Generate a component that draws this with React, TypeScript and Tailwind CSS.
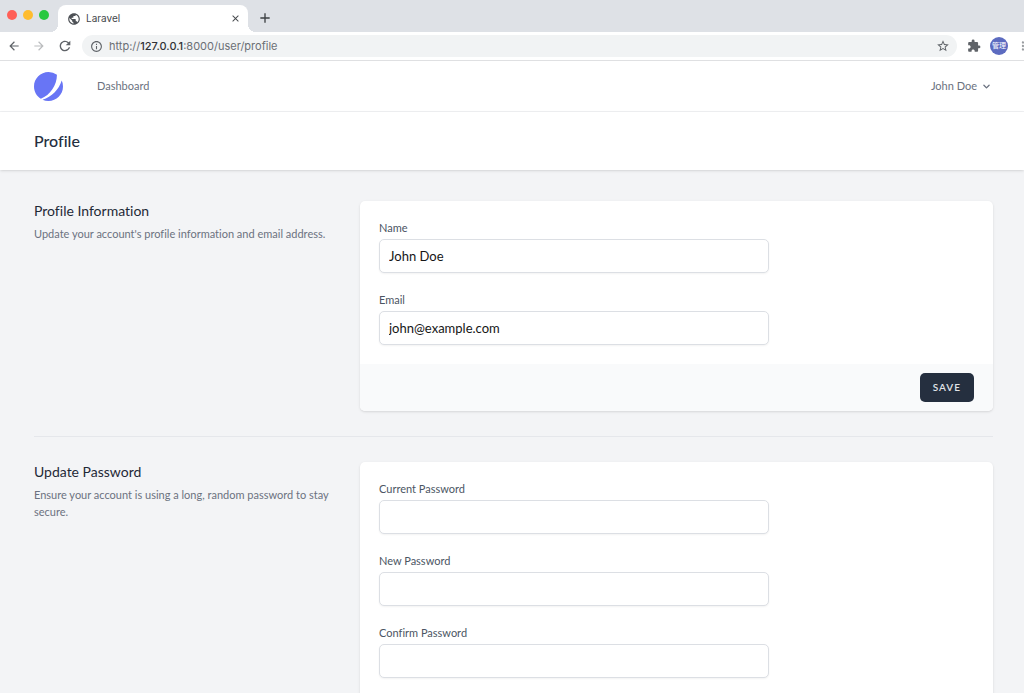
import { useState } from "react";
import {
  MdAdd,
  MdArrowBack,
  MdArrowForward,
  MdClose,
  MdExtension,
  MdInfoOutline,
  MdMoreVert,
  MdPublic,
  MdRefresh,
  MdStarBorder,
} from "react-icons/md";

function BrowserChrome() {
  return (
    <div className="shrink-0 font-['Inter','Noto_Sans_CJK_JP',sans-serif]">
      <div className="flex h-8 items-start bg-[#dee1e6] pl-[7px]">
        <div className="flex w-[51px] gap-[6px] pt-[10px]">
          <span className="size-[10px] rounded-full bg-[#ff5f57]" />
          <span className="size-[10px] rounded-full bg-[#febc2e]" />
          <span className="size-[10px] rounded-full bg-[#28c840]" />
        </div>
        <div className="relative mt-[5px] flex h-[27px] w-[190px] items-center rounded-t-lg bg-white pr-[7px] pl-[9px] text-[10px] text-[#45484c]">
          <span className="absolute bottom-0 -left-2 size-2 bg-[radial-gradient(circle_at_0_0,#dee1e6_8px,white_8px)]" />
          <span className="absolute -right-2 bottom-0 size-2 bg-[radial-gradient(circle_at_100%_0,#dee1e6_8px,white_8px)]" />
          <MdPublic className="size-[14px] text-[#4d5156]" />
          <span className="ml-[5px] flex-1">Laravel</span>
          <button aria-label="Close tab" className="text-[#45484c]">
            <MdClose className="size-[11px]" />
          </button>
        </div>
        <button aria-label="New tab" className="mt-[10px] ml-[9px] text-[#3c4043]">
          <MdAdd className="size-4" />
        </button>
      </div>
      <div className="flex h-[29px] items-center overflow-hidden border-b border-[#dfe0e2] bg-white pl-[7px] text-[#5f6368]">
        <button aria-label="Back">
          <MdArrowBack className="size-[14px]" />
        </button>
        <button aria-label="Forward" className="ml-[11px] text-[#babcbe]">
          <MdArrowForward className="size-[14px]" />
        </button>
        <button aria-label="Reload" className="ml-[11px]">
          <MdRefresh className="size-4" />
        </button>
        <div className="ml-[9px] flex h-[22px] flex-1 items-center rounded-full bg-[#f1f3f4] pr-[7px] pl-[8px]">
          <MdInfoOutline className="size-[13px]" />
          <div
            role="textbox"
            aria-label="Address"
            contentEditable
            suppressContentEditableWarning
            className="ml-[6px] flex-1 text-[11px] text-[#6b6f74]"
          >
            http://<span className="font-medium text-[#303236]">127.0.0.1</span>:8000/user/profile
          </div>
          <button aria-label="Bookmark this page">
            <MdStarBorder className="size-[14px]" />
          </button>
        </div>
        <button aria-label="Extensions" className="ml-[10px]">
          <MdExtension className="size-[14px]" />
        </button>
        <button className="ml-[9px] size-[18px] rounded-full bg-[#5c6bc0] text-[7px] text-white">
          管理
        </button>
        <button aria-label="Menu" className="-mr-[6px] ml-[8px] text-[#9a9da1]">
          <MdMoreVert className="size-[14px]" />
        </button>
      </div>
    </div>
  );
}

function Mark() {
  return (
    <svg viewBox="0 0 48 48" fill="none" className="size-[29px]" aria-hidden="true">
      <path
        d="M11.395 44.428C4.557 40.198 0 32.632 0 24 0 10.745 10.745 0 24 0a23.891 23.891 0 0113.997 4.502c-.2 17.907-11.097 33.245-26.602 39.926z"
        fill="#6875F5"
      />
      <path
        d="M14.134 45.885A23.914 23.914 0 0024 48c13.255 0 24-10.745 24-24 0-3.516-.756-6.856-2.115-9.866-4.659 15.143-16.608 27.092-31.75 31.751z"
        fill="#6875F5"
      />
    </svg>
  );
}

type FieldProps = { id: string; label: string; type?: string; initial?: string };

function Field({ id, label, type = "text", initial = "" }: FieldProps) {
  const [value, setValue] = useState(initial);
  return (
    <div className="col-span-4">
      <label htmlFor={id} className="block text-[11px] leading-4 text-[#4b5563]">
        {label}
      </label>
      <input
        id={id}
        type={type}
        value={value}
        onChange={(e) => setValue(e.target.value)}
        className="mt-[3px] block h-[34px] w-full rounded-[5px] border border-[#dcdfe4] bg-white px-[9px] text-[13px] text-[#161616] shadow-xs outline-none focus:border-indigo-300"
      />
    </div>
  );
}

type SectionProps = { title: string; description: string; fields: FieldProps[] };

function Section({ title, description, fields }: SectionProps) {
  return (
    <section className="grid grid-cols-3 gap-[19px]">
      <div>
        <h3 className="text-[14px] leading-5 text-[#1f2937]">{title}</h3>
        <p className="mt-1 text-[11px] leading-[17px] text-[#6b7280]">{description}</p>
      </div>
      <form
        className="col-span-2 overflow-hidden rounded-[5px] bg-white shadow-sm"
        onSubmit={(e) => e.preventDefault()}
      >
        <div className="grid grid-cols-6 gap-[19px] p-[19px]">
          {fields.map((f) => (
            <Field key={f.id} {...f} />
          ))}
        </div>
        <div className="flex justify-end bg-[#f9fafb] px-[19px] py-[9px]">
          <button className="h-[29px] rounded-[5px] bg-[#252f3f] px-[13px] text-[10px] font-semibold tracking-widest text-[#e2e4e8]">
            SAVE
          </button>
        </div>
      </form>
    </section>
  );
}

export default function App() {
  return (
    <div className="flex h-screen flex-col overflow-hidden bg-[#f3f4f6]">
      <BrowserChrome />
      <div className="min-h-0 flex-1 overflow-y-auto font-['Lato',sans-serif] [font-variant-ligatures:none] [scrollbar-width:none]">
        <nav className="flex h-[51px] items-center border-b border-[#f0f1f3] bg-white pr-[31px] pl-[34px] text-[11px] text-[#6b7280]">
          <a href="#home" aria-label="Home">
            <Mark />
          </a>
          <a href="#dashboard" className="ml-[34px]">
            Dashboard
          </a>
          <button className="ml-auto flex items-center gap-[3px]">
            John Doe
            <svg viewBox="0 0 20 20" fill="currentColor" className="size-[13px]" aria-hidden="true">
              <path
                fillRule="evenodd"
                d="M5.293 7.293a1 1 0 011.414 0L10 10.586l3.293-3.293a1 1 0 111.414 1.414l-4 4a1 1 0 01-1.414 0l-4-4a1 1 0 010-1.414z"
                clipRule="evenodd"
              />
            </svg>
          </button>
        </nav>
        <header className="flex h-[58px] items-center bg-white pr-[31px] pl-[34px] shadow-sm">
          <h2 className="text-[16px] leading-6 font-medium text-[#252f3f]">Profile</h2>
        </header>
        <main className="pt-[31px] pr-[31px] pb-8 pl-[34px]">
          <Section
            title="Profile Information"
            description="Update your account's profile information and email address."
            fields={[
              { id: "name", label: "Name", initial: "John Doe" },
              { id: "email", label: "Email", type: "email", initial: "john@example.com" },
            ]}
          />
          <hr className="my-[25px] border-[#e5e7eb]" />
          <Section
            title="Update Password"
            description="Ensure your account is using a long, random password to stay secure."
            fields={[
              { id: "current-password", label: "Current Password", type: "password" },
              { id: "new-password", label: "New Password", type: "password" },
              { id: "confirm-password", label: "Confirm Password", type: "password" },
            ]}
          />
        </main>
      </div>
    </div>
  );
}
